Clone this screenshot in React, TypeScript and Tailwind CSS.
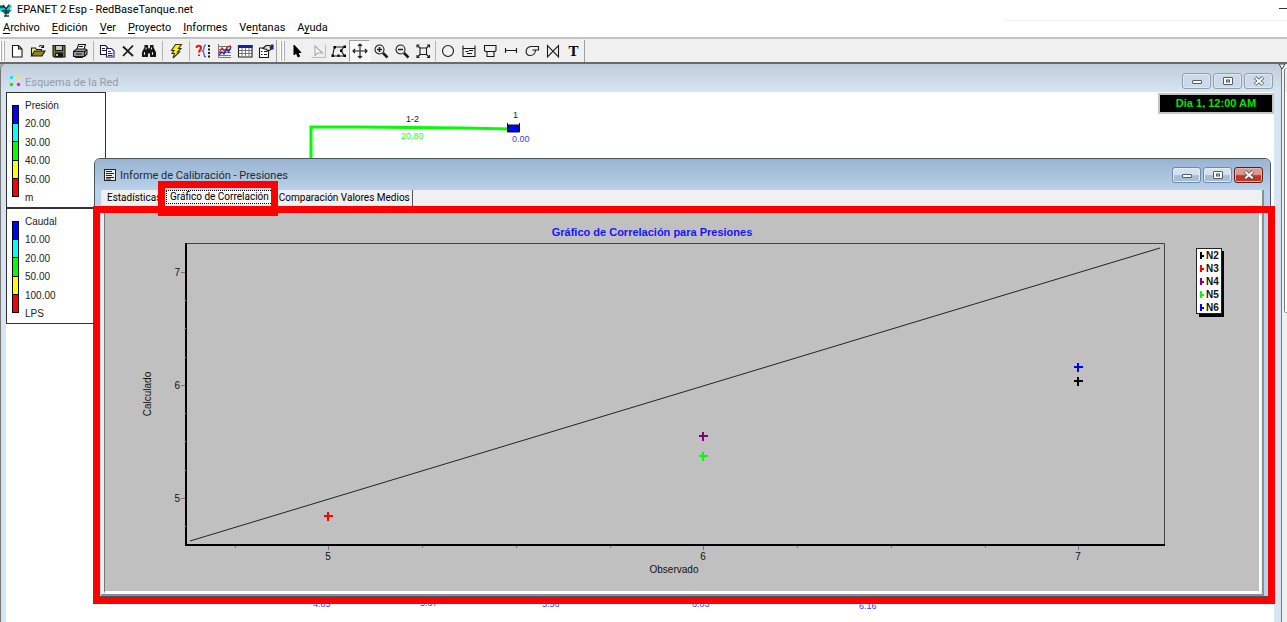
import React from "react";

type IconProps = { children: React.ReactNode };

const Icon = ({ children }: IconProps) => (
  <svg viewBox="0 0 16 16" className="size-4" fill="none" stroke="#1a1a1a" strokeWidth="1.1" aria-hidden="true">
    {children}
  </svg>
);

const icons: Record<string, React.ReactNode> = {
  Nuevo: <path d="M3.500 2.500h6l3.500 3.500v8h-9.500zM9.500 2.500v3.500h3.500" fill="#fff" />,
  Abrir: (
    <>
      <path d="M1.500 13V5h4l1 1.500h5v2" fill="#f5f08a" />
      <path d="M1.500 13l3-5h10.500l-3 5z" fill="#8a8a12" />
      <path d="M9 3.500c1.500-1.500 3-1.500 4 .5m.5-2v2.500h-2.500" />
    </>
  ),
  Guardar: (
    <>
      <path d="M2 2.500h12v11.500h-11l-1-1z" fill="#77772a" />
      <path d="M4.500 2.500h7v5h-7z" fill="#c9c9c9" />
      <path d="M4.500 10h7v4h-7z" fill="#111" />
      <path d="M6 11v2" stroke="#fff" strokeWidth="1.500" />
    </>
  ),
  Imprimir: (
    <>
      <path d="M5 6l1.500-4.500h7l-1.500 4.500" fill="#fff" />
      <path d="M1.500 8.500l3-2.500h9l1.500 1v4l-2.500 2.500h-11z" fill="#999" />
      <path d="M1.500 8.500h11v5M12.500 8.500l2.500-1.500M4 11h6M7 3.500h4M3 13.500l1 1h7" />
    </>
  ),
  Copiar: (
    <>
      <path d="M1.500 2.500h5l2 2v7h-7z" fill="#fff" />
      <path d="M3 5.500h3M3 7.500h4" />
      <path d="M7.500 5.500h5l2.500 2.500v6h-7.500z" fill="#fff" stroke="#22227a" />
      <path d="M9 8.500h3M9 10.500h4.500M9 12.500h4.500" stroke="#22227a" />
    </>
  ),
  Eliminar: <path d="M3 3.500l10 9.500M13 2.500L3 13" strokeWidth="1.800" />,
  Buscar: (
    <>
      <path d="M4 2.500h2.500v2L8 7l1.500-2.500v-2H12v2l2.500 5v4H9.500V10h-3v3.500H1.500v-4l2.500-5z" fill="#111" />
      <path d="M3.500 9v3M11.500 9v3M5 4.500v2M10.500 4.500v2" stroke="#ddd" />
    </>
  ),
  Calcular: (
    <path d="M7.500 1.500h6l-3 4h2.500l-3.500 3.500h2l-6.500 6 1.500-4.500H4l2-3H3.500z" fill="#f8f020" stroke="#3c3c00" />
  ),
  Consulta: (
    <>
      <path d="M1.500 5c0-3 4.500-3 4.500 0 0 2-2 2-2 4.500M4 11.500V13" stroke="#f01414" strokeWidth="2" />
      <path d="M11 2c-2 0-2 1-2 3s0 2.500-1.500 3c1.500.5 1.500 1 1.500 3s0 3 2 3" stroke="#2a48c8" />
      <path d="M14 2v2M14 5.500v2M14 9v2M14 12.500v2" strokeWidth="2" />
    </>
  ),
  Grafico: (
    <>
      <path d="M2.500 1v13.500H15M2 3.500h13M2 6.500h13M2 9.500h13M2 12.500h13" stroke="#777" strokeWidth="1" />
      <path d="M3 10l3-5 3 4 2-5 4-1" stroke="#e01616" strokeWidth="1.300" />
      <path d="M3 12l3-3 2 2 3-5 1.500 3L15 4" stroke="#2030c8" strokeWidth="1.300" />
    </>
  ),
  Tabla: (
    <>
      <path d="M1.500 2.500h13.500v11.500h-13.500z" fill="#fff" />
      <path d="M1.500 2.500h13.500v2h-13.500z" fill="#1620a8" stroke="#1620a8" />
      <path d="M1.500 7.500h13.500M1.500 10.500h13.500M5 5v9M8.500 5v9M12 5v9" strokeWidth="1" stroke="#777" />
    </>
  ),
  Opciones: (
    <>
      <path d="M1.500 5h9v9.500h-9z" fill="#fff" />
      <path d="M3 8.500h1.500M6 8.500h3M3 11.500h1.500M6 11.500h3" />
      <path d="M5 5.500l3-3h4l1 4-3 1.500-1.500-1.500z" fill="#ddd" />
      <path d="M13.500 2h1.500v4h-1.500z" fill="#1620a8" stroke="#1620a8" />
    </>
  ),
  Seleccionar: <path d="M5 2v10l2.300-2 1.700 4 1.600-.7-1.700-3.800h3z" fill="#000" stroke="#000" strokeWidth="1" />,
  Vertice: (
    <>
      <path d="M1.500 14.500h14V1.500" stroke="#bdbdbd" />
      <path d="M5 3v9.500l2.500-2.500h5z" stroke="#a9a9a9" fill="#f7f7f7" />
    </>
  ),
  Region: (
    <>
      <path d="M3.500 4H13l-3 3.500 3.500 5.500h-12l2-9z" />
      <path d="M2.500 3h2.500v2.500H2.500zM12.500 2.500h2.500v2.500h-2.500zM9 6.500h2.500v2.500h-2.500zM12.500 11.500h2.500v2.500h-2.500zM.5 11.500h2.500v2.500h-2.500zM6.500 11.500h2v2.500h-2z" fill="#000" stroke="none" />
    </>
  ),
  Desplazar: <path d="M8 1v14M1 8h14M6 3l2-2 2 2M6 13l2 2 2-2M3 6L1 8l2 2M13 6l2 2-2 2" />,
  Acercar: (
    <>
      <circle cx="6.500" cy="6.500" r="4.500" />
      <path d="M4 6.500h5M6.500 4v5" strokeWidth="1.500" />
      <path d="M10 10l4.500 4.500" strokeWidth="2.500" />
    </>
  ),
  Alejar: (
    <>
      <circle cx="6.500" cy="6.500" r="4.500" />
      <path d="M4 6.500h5" strokeWidth="1.500" />
      <path d="M10 10l4.500 4.500" strokeWidth="2.500" />
    </>
  ),
  Extension: (
    <>
      <path d="M5 5h6.500v6.500H5z" />
      <path d="M5 5L2.500 2.500M11.500 5L14 2.500M5 11.500L2.500 14M11.500 11.500L14 14" />
      <path d="M2 4.500V2h2.500M12 2h2.500v2.500M2 12v2.500h2.500M12 14.500h2.500V12" />
    </>
  ),
  Nudo: <circle cx="8" cy="8" r="5.500" />,
  Embalse: <path d="M2 2.500v11h12v-11M2 5.500h12M4.500 8.500h3M8 7.500h4M6 10.500h5" />,
  Tanque: <path d="M2.500 2.500h11.500v5l-1 1h-9.500l-1-1zM5 8.500v5h7v-5" />,
  Tuberia: <path d="M2.500 5v5M13.500 5v5M2.500 7.500h11" />,
  Bomba: <path d="M8 3.500h6.500v3.500H11.500M8 3.500C.5 3.500.5 12.500 6 12.500c3.500 0 5.500-2.500 5.500-5.500M8.500 7h3" />,
  Valvula: <path d="M2.500 2.500v11.500l11-11.500v11.500z" />,
};

const Tool = ({ name, pressed }: { name: string; pressed?: boolean }) => (
  <button
    type="button"
    aria-label={name}
    aria-pressed={pressed}
    className={
      pressed
        ? "flex h-[22px] w-[21px] items-center justify-center border border-[#a0a0a0] border-r-white border-b-white bg-[#f8f8f8]"
        : "flex h-[22px] w-[21px] items-center justify-center"
    }
  >
    {name === "Texto" ? (
      <span className="font-['Liberation_Serif',serif] text-[15px] leading-4 font-bold">T</span>
    ) : (
      <Icon>{icons[name]}</Icon>
    )}
  </button>
);

const Separator = ({ narrow }: { narrow?: boolean }) => (
  <span className={narrow ? "flex w-1 justify-center" : "flex w-1.5 justify-center"}>
    <span className="h-5 w-px bg-[#b4b4b4]" />
  </span>
);

const Grip = () => (
  <span className="flex w-1.5 gap-px">
    <span className="h-5 w-0.5 border-r border-[#b0b0b0] bg-white" />
    <span className="h-5 w-0.5 border-r border-[#b0b0b0] bg-white" />
  </span>
);

const menu: [string, string, string][] = [
  ["", "A", "rchivo"],
  ["", "E", "dición"],
  ["", "V", "er"],
  ["", "P", "royecto"],
  ["", "I", "nformes"],
  ["Ve", "n", "tanas"],
  ["A", "y", "uda"],
];

const Toolbar = () => (
  <div className="flex h-[25px] items-center border-t-2 border-[#c2c2c2] bg-[#f0f0f0]" role="toolbar">
    <Grip />
    {["Nuevo", "Abrir", "Guardar", "Imprimir"].map((n) => <Tool key={n} name={n} />)}
    <Separator />
    {["Copiar", "Eliminar", "Buscar"].map((n) => <Tool key={n} name={n} />)}
    <Separator />
    <Tool name="Calcular" />
    <Separator />
    {["Consulta", "Grafico", "Tabla", "Opciones"].map((n) => <Tool key={n} name={n} />)}
    <span className="mr-[3px] h-[22px] w-px bg-[#a0a0a0]" />
    <Grip />
    {["Seleccionar", "Vertice", "Region"].map((n) => <Tool key={n} name={n} />)}
    <Tool name="Desplazar" pressed />
    {["Acercar", "Alejar", "Extension"].map((n) => <Tool key={n} name={n} />)}
    <Separator narrow />
    {["Nudo", "Embalse", "Tanque", "Tuberia", "Bomba", "Valvula", "Texto"].map((n) => <Tool key={n} name={n} />)}
    <span className="h-[22px] w-px bg-[#a0a0a0]" />
  </div>
);

const WindowButtons = ({ active }: { active?: boolean }) => {
  const plain = active
    ? "flex h-4 w-[29px] items-center justify-center rounded-[3px] border border-[#6f8aa8] bg-linear-to-b from-[#d3e2f1] from-45% to-[#a5bfda] to-55% shadow-[inset_0_0_0_1px_#e3eefa]"
    : "flex h-4 w-[29px] items-center justify-center rounded-[3px] border border-[#8f9fb0] bg-[#cbd9e8] shadow-[inset_0_0_0_1px_#dfe9f4]";
  const close = active
    ? "flex h-4 w-[29px] items-center justify-center rounded-[3px] border border-[#6a1a14] bg-linear-to-b from-[#dd9a8c] from-45% to-[#b93a28] to-55% shadow-[inset_0_0_0_1px_#e8b3a8]"
    : plain;
  return (
    <div className="flex gap-0.5">
      <button type="button" aria-label="Minimizar" className={plain}>
        <svg viewBox="0 0 12 10" className="h-2.5 w-3">
          <rect x="1.500" y="4.500" width="9" height="3" rx=".5" fill="#fff" stroke="#555c66" />
        </svg>
      </button>
      <button type="button" aria-label="Maximizar" className={plain}>
        <svg viewBox="0 0 12 10" className="h-2.5 w-3">
          <rect x="1.500" y="1.500" width="9" height="7" rx=".5" fill="#fff" stroke="#555c66" />
          <rect x="4.500" y="4" width="3" height="2" fill="#b9cce0" stroke="#555c66" />
        </svg>
      </button>
      <button type="button" aria-label="Cerrar" className={close}>
        <svg viewBox="0 0 12 10" className="h-2.5 w-3">
          <path d="M2 1.500l8 7M10 1.500l-8 7" stroke="#4f5661" strokeWidth="3.600" />
          <path d="M2.300 1.800l7.400 6.400M9.700 1.800l-7.400 6.400" stroke="#fff" strokeWidth="1.900" />
        </svg>
      </button>
    </div>
  );
};

const Legend = ({ labels }: { labels: string[] }) => (
  <div className="flex h-[116px] w-[100px] gap-[6px] border border-[#333] bg-white pt-[5px] pl-[5px]">
    <div className="mt-[7px] flex h-[92px] w-[7px] flex-col divide-y divide-black border border-black">
      <span className="flex-1 bg-[#0000ff]" />
      <span className="flex-1 bg-[#00ffff]" />
      <span className="flex-1 bg-[#00ff00]" />
      <span className="flex-1 bg-[#ffff00]" />
      <span className="flex-1 bg-[#ff0000]" />
    </div>
    <ul className="flex h-[108px] flex-col justify-between text-[10px] leading-4 text-[#222]">
      {labels.map((l) => (
        <li key={l}>{l}</li>
      ))}
    </ul>
  </div>
);

const networkLabels = [
  { x: 307, y: 515, text: "4.85" },
  { x: 414, y: 514, text: "5.37" },
  { x: 536, y: 515, text: "5.56" },
  { x: 686, y: 515, text: "6.03" },
  { x: 853, y: 517, text: "6.16" },
];

const NetworkMap = () => (
  <svg className="absolute inset-0 size-full" fontSize="9" role="img" aria-label="Red">
    <path d="M305 71V35h50l101 1 51 1" fill="none" stroke="#00ff00" strokeWidth="3" />
    <rect x="502" y="33" width="11" height="7" fill="#0000ff" stroke="#111" />
    <path d="M501.500 31v9M513.500 31v9" stroke="#111" />
    <text x="400" y="30" fill="#222">1-2</text>
    <text x="507" y="26" fill="#222">1</text>
    <text x="395" y="47" fill="#1fff1f">20.80</text>
    <text x="506" y="50" fill="#3c3cff">0.00</text>
    {networkLabels.map((l) => (
      <text key={l.text} x={l.x} y={l.y} fill="#3c3cff">
        {l.text}
      </text>
    ))}
  </svg>
);

const series = [
  { name: "N2", x: 973, y: 168, color: "#000000" },
  { name: "N3", x: 223, y: 303, color: "#ff0000" },
  { name: "N4", x: 598, y: 223, color: "#800080" },
  { name: "N5", x: 598, y: 243, color: "#00ff00" },
  { name: "N6", x: 973, y: 154, color: "#0000ff" },
];

const xMinor = [130, 317, 411, 505, 692, 786, 880];
const yMinor = [87, 115, 144, 200, 228, 257, 313];

const Chart = () => (
  <svg viewBox="0 0 1154 378" className="block w-full bg-[#c0c0c0]" fontSize="10" fill="#111">
    <text x="547" y="23" textAnchor="middle" fontWeight="bold" fill="#1414ff" fontSize="11">
      Gráfico de Correlación para Presiones
    </text>
    <path d="M81 30.500h978.500V331" fill="none" stroke="#444" />
    <path d="M81 30v302h979" fill="none" stroke="#000" strokeWidth="2" />
    <path d="M85 328L1055 35" stroke="#222" />
    {[223, 598, 973].map((x, i) => (
      <g key={x}>
        <path d={`M${x + 0.5} 333v4`} stroke="#777" />
        <text x={x} y="347" textAnchor="middle">{i + 5}</text>
      </g>
    ))}
    {[285, 172, 59].map((y, i) => (
      <g key={y}>
        <path d={`M76 ${y + 0.5}h4`} stroke="#777" />
        <text x="75" y={y + 4} textAnchor="end">{i + 5}</text>
      </g>
    ))}
    {xMinor.map((x) => <path key={x} d={`M${x + 0.5} 333v2`} stroke="#777" />)}
    {yMinor.map((y) => <path key={y} d={`M79 ${y + 0.5}h2`} stroke="#999" />)}
    <text x="569" y="360" textAnchor="middle">Observado</text>
    <text transform="translate(46 181) rotate(-90)" textAnchor="middle">Calculado</text>
    {series.map((s) => (
      <path key={s.name} d={`M${s.x - 4} ${s.y}h9M${s.x} ${s.y - 4}v9`} stroke={s.color} strokeWidth="2" />
    ))}
    <rect x="1094" y="38" width="25" height="66" fill="#000" />
    <rect x="1091.500" y="35.500" width="25" height="65" fill="#fff" stroke="#222" />
    {series.map((s, i) => (
      <g key={s.name}>
        <path d={`M1096 ${39 + i * 13}v7M1096 ${43 + i * 13}h3`} stroke={s.color} strokeWidth="2" />
        <text x="1101" y={46 + i * 13} fontWeight="bold">{s.name}</text>
      </g>
    ))}
  </svg>
);

const ReportWindow = () => (
  <section className="absolute top-[94px] right-[10px] left-[93px] rounded-t-md border border-[#50565e] bg-[#b9d1ea] shadow-[inset_0_1px_0_#dfeaf6]">
    <header className="flex h-[31px] items-center justify-between rounded-t-md bg-linear-to-b from-[#99b4d1] to-[#b9d1ea] pr-[7px] pl-[9px]">
      <div className="flex items-center gap-1">
        <svg viewBox="0 0 12 12" className="size-3" aria-hidden="true">
          <rect x=".5" y=".5" width="11" height="11" fill="#eee" stroke="#222" />
          <path d="M2 2.500h6M2 4.500h8M2 6.500h6M2 8.500h8M2 10h5" stroke="#222" />
        </svg>
        <h2 className="pt-[3px] font-[Roboto,sans-serif] text-[11px] leading-4 text-[#222b36]">
          Informe de Calibración - Presiones
        </h2>
      </div>
      <WindowButtons active />
    </header>
    <div className="mx-1.5 border-r-2 border-b-2 border-[#8a8f94] bg-[#f0f0f0]">
      <div role="tablist" className="flex h-[23px] items-start pl-0.5 font-[Roboto,sans-serif] text-[10px] leading-4 text-black">
        <button type="button" role="tab" className="w-[63px] pl-1 text-left">Estadísticas</button>
        <button
          type="button"
          role="tab"
          aria-selected="true"
          className="flex h-[14px] items-center border border-dotted border-black bg-[#f8f8f8] px-[3px]"
        >
          Gráfico de Correlación
        </button>
        <button type="button" role="tab" className="border-r border-[#555] pr-0.5 pl-1.5">Comparación Valores Medios</button>
      </div>
      <div className="mr-px ml-[3px] border-r-2 border-b-[3px] border-l border-r-white border-b-white border-l-[#777]">
        <Chart />
      </div>
    </div>
    <div className="pointer-events-none absolute top-[47px] -right-[5px] -bottom-2 -left-0.5 border-[7px] border-[#ff0000]" />
    <div className="pointer-events-none absolute top-[22px] left-[63px] h-[35px] w-[120px] border-[7px] border-[#ff0000]" />
  </section>
);

const MapWindow = () => (
  <section className="relative flex min-w-0 flex-1 flex-col rounded-tl-md border-r border-l border-[#777] bg-[#d7e4f2]">
    <header className="flex h-7 items-center justify-between rounded-tl-md bg-linear-to-b from-[#bfcddb] to-[#d7e4f2] pt-1.5 pr-2 pl-2">
      <div className="flex items-center gap-1">
        <svg viewBox="0 0 12 12" className="size-3" aria-hidden="true">
          <path d="M3 3h7v7H3z" fill="none" stroke="#dfe6ee" />
          <circle cx="2.500" cy="2.500" r="1.700" fill="#00e5ff" />
          <circle cx="9.500" cy="2.500" r="1.700" fill="#f2ee20" />
          <circle cx="2.500" cy="9.500" r="1.700" fill="#10e010" />
          <circle cx="9.500" cy="9.500" r="1.700" fill="#f010f0" />
        </svg>
        <h2 className="pt-[3px] font-[Roboto,sans-serif] text-[11px] leading-4 text-[#969da6]">Esquema de la Red</h2>
      </div>
      <WindowButtons />
    </header>
    <div className="relative mr-[7px] ml-[5px] flex-1 bg-white">
      <NetworkMap />
      <div className="relative flex w-[100px] flex-col">
        <Legend labels={["Presión", "20.00", "30.00", "40.00", "50.00", "m"]} />
        <Legend labels={["Caudal", "10.00", "20.00", "50.00", "100.00", "LPS"]} />
      </div>
      <output className="absolute top-px right-0 flex h-[21px] w-[116px] items-center justify-center border-2 border-[#c4c4c4] bg-black text-[11px] font-bold text-[#00e400]">
        Dia 1, 12:00 AM
      </output>
    </div>
    <ReportWindow />
  </section>
);

export default function App() {
  return (
    <main className="flex h-screen flex-col overflow-hidden bg-white font-['Liberation_Sans',sans-serif] text-black">
      <header className="flex h-5 items-center justify-between font-[Roboto,sans-serif] text-[11px]">
        <div className="flex items-center gap-1">
          <svg viewBox="0 0 13 14" className="h-3.5 w-[13px]" aria-hidden="true">
            <path d="M0 2h4l2 3 3-4 3 2-2 3 2 1-3 3H4L0 8z" fill="#18c8cc" />
            <path d="M0 4h4M3 2l3 4v7M9 2L6 6M2 8h8M4 10h5M4 13h5" stroke="#123a3e" strokeWidth="1.300" fill="none" />
          </svg>
          <h1>EPANET 2 Esp - RedBaseTanque.net</h1>
        </div>
        <button type="button" aria-label="Minimizar aplicación" className="mb-1 w-2 border-t border-[#333]" />
      </header>
      <nav className="flex h-[17px] items-center gap-3 pl-[3px] font-[Roboto,sans-serif] text-[11px]">
        {menu.map(([a, key, b]) => (
          <button type="button" key={a + key + b}>
            {a}
            <span className="underline underline-offset-2">{key}</span>
            {b}
          </button>
        ))}
        <span className="ml-auto w-[22%] self-start border-t border-[#efefef]" />
      </nav>
      <Toolbar />
      <div className="flex min-h-0 flex-1 bg-[#f0f0f0]">
        <div className="flex min-w-0 flex-1 border-t-2 border-[#696969] bg-[#ababab]">
          <MapWindow />
        </div>
        <aside className="relative w-[5px] border-t-2 border-[#696969]">
          <div className="mt-1 ml-0.5 h-[245px] rounded-l border-b border-l border-[#777] pt-6">
            <div className="h-full bg-white" />
          </div>
          <svg viewBox="0 0 8 6" className="absolute top-0 -left-1 h-1.5 w-2" aria-hidden="true">
            <path d="M1 0h6L4 5z" fill="#fff" stroke="#444" />
          </svg>
        </aside>
      </div>
    </main>
  );
}
